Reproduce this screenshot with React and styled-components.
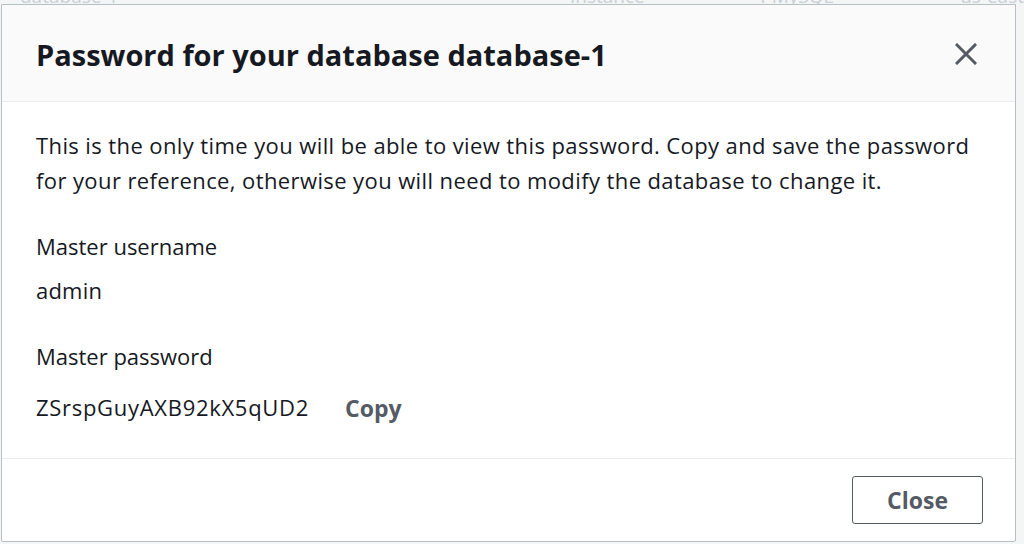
import React from "react";
import styled, { createGlobalStyle } from "styled-components";

const GlobalStyle = createGlobalStyle`
  html, body {
    margin: 0;
    padding: 0;
    width: 1024px;
    height: 544px;
    overflow: hidden;
    background: #f4f5f5;
    font-family: "Open Sans", "Noto Sans", Arial, sans-serif;
  }
`;

const App = () => {
  return (
    <Page>
      <GlobalStyle />
      <TableRow>
        <Cell width="560px">database-1</Cell>
        <Cell width="180px">Instance</Cell>
        <Cell width="190px">PMySQL</Cell>
        <Cell>us-east</Cell>
      </TableRow>

      <Modal>
        <Header>
          <Title>Password for your database database-1</Title>
          <IconButton aria-label="Close">
            <svg width="22" height="22" viewBox="0 0 22 22">
              <path
                d="M2 2 L20 20 M20 2 L2 20"
                stroke="#545b64"
                strokeWidth="3"
                strokeLinecap="square"
                fill="none"
              />
            </svg>
          </IconButton>
        </Header>

        <Body>
          <Text>
            This is the only time you will be able to view this password. Copy
            and save the password for your reference, otherwise you will need to
            modify the database to change it.
          </Text>

          <Field>
            <Label>Master username</Label>
            <Value>admin</Value>
          </Field>

          <Field gap="16px">
            <Label>Master password</Label>
            <ValueRow>
              <Value spacing="0.7px">ZSrspGuyAXB92kX5qUD2</Value>
              <LinkButton>Copy</LinkButton>
            </ValueRow>
          </Field>
        </Body>

        <Footer>
          <Button>Close</Button>
        </Footer>
      </Modal>
    </Page>
  );
};

export default App;

// ---------------------------- styled-components ----------------------
const Page = styled.div`
  position: relative;
  width: 1024px;
  height: 544px;
  overflow: hidden;
`;

const TableRow = styled.div`
  display: flex;
  margin-top: -16px;
  height: 24px;
  align-items: center;
  color: #c9d0d6;
  font-size: 19px;
`;

const Cell = styled.div`
  width: ${(p) => p.width || "auto"};
  padding-left: 20px;
  white-space: nowrap;
`;

const Modal = styled.div`
  position: absolute;
  top: 4px;
  left: 1px;
  width: 1015px;
  height: 538px;
  box-sizing: border-box;
  background: #ffffff;
  border: 1px solid #b7bfc3;
  border-radius: 0 0 2px 2px;
  display: flex;
  flex-direction: column;
  color: #16191f;
`;

const Header = styled.div`
  height: 97px;
  box-sizing: border-box;
  flex-shrink: 0;
  background: #fafafa;
  border-bottom: 1px solid #eaeded;
  display: flex;
  align-items: center;
  justify-content: space-between;
  padding: 2px 38px 0 34px;
`;

const Title = styled.h2`
  margin: 0;
  font-size: 29px;
  font-weight: 700;
  letter-spacing: 0;
  color: #16191f;
`;

const IconButton = styled.button`
  background: none;
  border: none;
  padding: 0;
  display: flex;
  cursor: pointer;
`;

const Body = styled.div`
  flex: 1;
  padding: 26px 36px 0 34px;
  border-bottom: 1px solid #eaeded;
  font-size: 22px;
  line-height: 35px;
`;

const Text = styled.p`
  margin: 0 0 31px;
  max-width: 945px;
  letter-spacing: 0.4px;
`;

const Field = styled.div`
  display: flex;
  flex-direction: column;
  gap: ${(p) => p.gap || "9px"};
  margin-bottom: 31px;
`;

const Label = styled.div`
  color: #16191f;
`;

const Value = styled.div`
  color: #16191f;
  letter-spacing: ${(p) => p.spacing || "0.2px"};
`;

const ValueRow = styled.div`
  display: flex;
  align-items: center;
  gap: 36px;
`;

const LinkButton = styled.button`
  background: none;
  border: none;
  padding: 0;
  font-family: inherit;
  font-size: 23px;
  font-weight: 700;
  color: #545b64;
  cursor: pointer;
`;

const Footer = styled.div`
  height: 82px;
  flex-shrink: 0;
  display: flex;
  align-items: center;
  justify-content: flex-end;
  padding: 0 32px;
`;

const Button = styled.button`
  width: 131px;
  height: 48px;
  background: #ffffff;
  border: 1.5px solid #545b64;
  border-radius: 3px;
  font-family: inherit;
  font-size: 23px;
  font-weight: 700;
  color: #545b64;
  cursor: pointer;
`;
